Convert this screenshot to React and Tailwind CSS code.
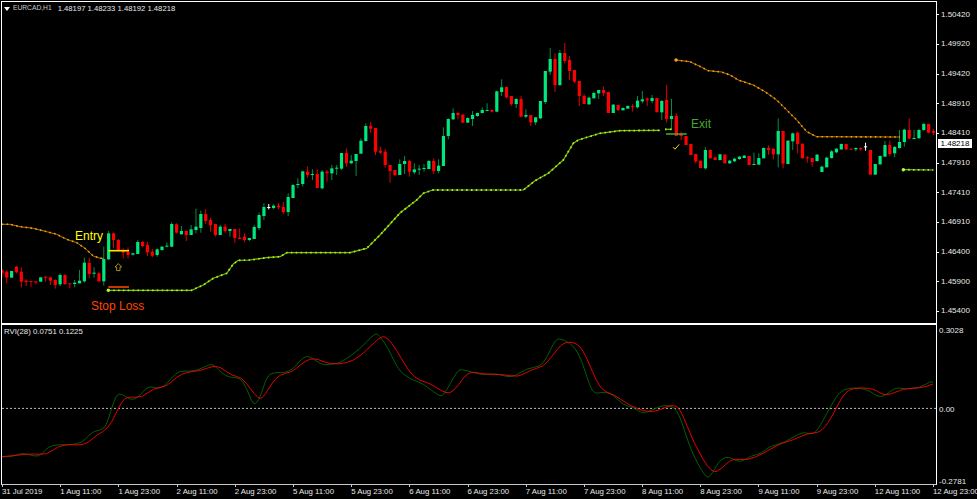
const PITCH = 4.852;
const barX = (i) => 1.9 + PITCH * i;

// candle rows: [bodyTop, bodyBottom, wickTop, wickBottom, type], traced at 3x from the origin y
const segments = [
  { oy: 190, start: 0, rows: [
    [240,250,235,262,'r'],[245,263,240,280,'r'],[243,263,243,263,'g'],[230,247,228,250,'r'],[245,275,232,292,'r'],
    [272,276,268,288,'r'],[273,276,273,290,'r'],[274,277,274,283,'r'],[262,275,262,275,'g'],[260,262,258,275,'r'],
    [262,272,260,285,'r'],[270,285,268,296,'r'],[255,283,250,288,'g'],[255,282,253,285,'r'],[280,282,280,295,'r'],
    [278,282,270,292,'g'],[272,280,240,280,'g'],[218,274,203,278,'g'],[219,252,203,265,'r'],[248,250,232,263,'g'],
    [250,274,245,276,'r'],[207,274,170,287,'g'],[130,208,123,210,'g'],[130,150,128,175,'r'],[150,183,147,185,'r'],
    [183,188,175,205,'r'],[185,195,172,205,'r'],[190,194,188,196,'g'],[156,192,150,192,'g'],[156,168,153,172,'r'],
    [165,187,155,198,'r'],[185,197,177,202,'r'],[178,195,175,200,'g'],[170,180,168,182,'g'],[167,170,157,172,'g'],
    [102,170,97,172,'g'],[103,128,100,130,'r'],
  ] },
  { oy: 120, start: 37, rows: [
    [333,343,318,343,'g'],[333,345,333,363,'r'],[328,345,315,345,'g'],[320,330,266,340,'g'],[282,324,272,338,'g'],
    [282,303,267,312,'r'],[300,316,293,335,'r'],[312,345,312,350,'r'],[320,345,315,345,'g'],[320,333,312,338,'r'],
    [327,333,327,350,'g'],[327,354,327,368,'r'],[353,357,325,357,'r'],[350,360,340,367,'r'],[354,360,354,363,'g'],
    [321,357,315,357,'g'],[285,324,278,330,'g'],[261,288,250,300,'g'],[261,263,252,268,'w'],[257,264,253,268,'g'],
    [257,262,249,268,'r'],[261,276,246,282,'r'],[231,276,220,288,'g'],[195,234,192,234,'g'],[192,194,175,205,'g'],
    [154,192,152,200,'g'],[155,165,140,173,'r'],[162,165,148,180,'g'],[162,204,148,204,'r'],[155,205,150,208,'g'],
    [155,159,150,185,'r'],
  ] },
  { oy: 30, start: 68, rows: [
    [415,430,405,450,'g'],[413,416,405,435,'g'],[369,416,369,420,'g'],[369,400,355,410,'r'],[392,400,375,402,'g'],
    [372,393,372,438,'g'],[332,371,325,371,'g'],[288,333,280,335,'g'],[288,296,276,308,'r'],[294,365,294,375,'r'],
    [362,368,350,372,'r'],[365,405,357,413,'r'],[405,423,405,458,'r'],[420,436,420,436,'r'],[402,435,388,435,'g'],
    [393,402,378,432,'g'],[393,425,390,440,'r'],[418,427,400,433,'g'],[416,419,405,435,'g'],[414,417,402,425,'g'],
    [393,417,390,417,'g'],[393,423,385,432,'r'],[407,423,388,430,'g'],[318,408,292,408,'g'],[267,318,265,328,'g'],
    [249,268,235,270,'g'],[249,255,245,268,'r'],[254,278,252,278,'r'],[264,278,262,278,'g'],[255,267,243,288,'g'],
    [249,258,248,260,'g'],[240,249,232,250,'g'],[240,243,220,243,'g'],[240,245,238,247,'r'],[184,245,182,247,'g'],
    [172,186,148,198,'g'],[171,202,170,205,'r'],[198,222,198,228,'r'],[207,222,205,234,'g'],[207,260,198,262,'r'],
    [255,260,238,264,'g'],[255,277,255,288,'r'],[262,277,262,285,'g'],[213,265,213,268,'g'],[123,216,123,222,'g'],
    [87,125,54,135,'g'],[87,165,70,186,'r'],[69,165,60,168,'g'],[69,93,39,100,'r'],[90,123,78,150,'r'],
    [120,155,120,160,'r'],[153,198,153,228,'r'],[198,222,192,222,'r'],[203,223,200,225,'g'],[189,205,185,205,'g'],
    [180,190,180,207,'g'],[180,190,170,198,'r'],[186,249,186,249,'r'],[224,249,222,249,'g'],[225,240,225,243,'r'],
    [234,241,232,241,'g'],[228,236,226,236,'g'],[228,231,222,245,'r'],[212,232,198,235,'g'],
  ] },
  { oy: 50, start: 132, rows: [
    [148,154,123,160,'g'],[146,151,142,168,'r'],[144,153,135,160,'g'],[144,186,144,188,'r'],[153,187,150,210,'g'],
    [150,207,105,218,'r'],[198,207,147,240,'g'],[198,258,190,258,'r'],[252,258,245,270,'r'],[258,285,258,285,'r'],
    [282,315,282,315,'r'],[312,334,312,340,'r'],[332,354,332,354,'r'],[300,355,292,358,'g'],[300,325,298,325,'r'],
    [322,330,320,330,'r'],[313,330,312,332,'g'],[314,340,312,340,'r'],[332,340,330,342,'g'],[326,334,323,336,'g'],
    [320,327,318,330,'g'],[317,324,315,324,'g'],[318,345,318,345,'r'],[342,345,308,345,'g'],[324,344,310,345,'g'],
    [294,325,292,325,'g'],[294,300,287,315,'r'],[296,313,296,328,'r'],[243,313,205,352,'g'],[243,341,243,355,'r'],
    [272,342,270,342,'g'],[250,274,248,300,'g'],[248,282,245,310,'r'],[281,325,281,325,'r'],[322,325,318,338,'r'],
    [324,336,324,350,'r'],[314,333,312,335,'g'],[350,366,347,366,'g'],[323,352,320,352,'g'],[304,324,300,326,'g'],
    [296,307,295,310,'g'],[282,298,280,300,'g'],[282,298,282,300,'r'],[296,298,296,298,'r'],[294,298,292,304,'g'],
    [294,298,292,303,'r'],[289,290,278,302,'w'],[300,374,300,374,'r'],[342,374,342,374,'g'],[318,343,316,345,'g'],
    [285,320,273,320,'g'],[285,312,272,318,'r'],[291,310,288,322,'g'],[276,294,240,296,'g'],[239,276,236,290,'g'],
    [240,266,205,266,'r'],[264,267,240,268,'g'],[240,265,236,265,'g'],[222,240,218,242,'g'],[222,248,222,250,'r'],
    [243,248,237,255,'r'],
  ] },
];

const candles = segments.flatMap(({ oy, start, rows }) =>
  rows.map(([top, bottom, high, low, type], n) => ({
    x: barX(start + n),
    top: oy + top / 3,
    bottom: oy + bottom / 3,
    high: oy + high / 3,
    low: oy + low / 3,
    type,
  }))
);

const candleColors = {
  g: { body: '#00e87c', wick: '#008f48' },
  r: { body: '#ff0000', wick: '#e00000' },
  w: { body: '#ffffff', wick: '#ffffff' },
};

const fromCrop = (ox, oy, pts) => pts.map(([x, y]) => [ox + x / 3, oy + y / 3]);
const toLine = (pts) => pts.map(([x, y]) => `${x.toFixed(1)},${y.toFixed(1)}`).join(' ');

// rounds the corners of a traced line with quadratic segments
function smooth(pts) {
  let d = `M${pts[0][0].toFixed(1)} ${pts[0][1].toFixed(1)}`;
  for (let i = 1; i < pts.length - 1; i++) {
    const mx = (pts[i][0] + pts[i + 1][0]) / 2;
    const my = (pts[i][1] + pts[i + 1][1]) / 2;
    d += ` Q${pts[i][0].toFixed(1)} ${pts[i][1].toFixed(1)} ${mx.toFixed(1)} ${my.toFixed(1)}`;
  }
  const last = pts[pts.length - 1];
  return `${d} L${last[0].toFixed(1)} ${last[1].toFixed(1)}`;
}

const orangeLeft = fromCrop(0, 190, [[5,103],[30,103],[60,110],[100,115],[140,125],[170,133],[200,148],[230,158],[255,175],[280,198],[300,205],[312,205]]);
const orangeRight = fromCrop(640, 50, [[108,30],[150,35],[185,52],[205,62],[245,66],[270,75],[295,90],[340,105],[375,125],[410,150],[440,180],[470,210],[500,245],[530,260],[780,261]]);
const limeMain = [
  ...fromCrop(0, 190, [[325,301],[575,301],[610,285],[640,265],[680,250],[700,222],[715,211],[750,210],[800,203],[840,200],[860,188]]),
  [350,252.7],[366.7,248.3],[380,235],[400,213],
  ...fromCrop(330, 30, [[260,510],[280,490],[308,480],[580,480],[615,452],[655,430],[700,390],[730,340],[745,330],[810,310],[870,302],[990,301]]),
];
const limeStub = fromCrop(640, 50, [[75,238],[95,238]]);
const limeRight = fromCrop(640, 50, [[790,359],[880,360]]);

const rviGreen = [
  ...fromCrop(0, 320, [[5,410],[35,412],[65,397],[105,410],[125,405],[150,373],[240,375],[270,342],[285,333],[305,330],[320,315],[345,232],[358,220],[375,228],[395,241],[415,232],[443,198],[470,205],[490,202],[530,157],[550,153],[590,153],[630,132],[645,137],[665,160],[690,173],[720,172],[740,205],[755,245],[765,254],[780,235],[800,170],[820,157],[870,158],[910,110],[930,109],[965,135]]),
  ...fromCrop(330, 320, [[0,133],[30,130],[90,88],[135,38],[150,48],[175,85],[205,150],[240,178],[280,190],[330,232],[345,220],[380,155],[395,147],[430,158],[460,165],[500,160],[545,175],[590,145],[630,140],[650,115],[675,60],[690,55],[730,75],[755,120],[780,200],[795,222],[825,215],[850,225],[880,255],[910,262],[940,283],[990,258]]),
  ...fromCrop(647, 320, [[70,255],[95,275],[130,390],[175,472],[190,470],[215,425],[235,410],[255,415],[280,428],[310,408],[345,400],[365,380],[415,367],[465,335],[490,343],[510,335],[550,260],[585,203],[660,205],[700,238],[745,202],[770,207],[820,203],[850,184],[858,187]]),
];
const rviRed = [
  ...fromCrop(0, 320, [[5,410],[60,405],[95,401],[140,405],[175,378],[210,373],[240,376],[265,368],[290,345],[325,325],[345,285],[370,237],[390,230],[425,233],[460,205],[500,200],[530,170],[560,156],[600,153],[640,137],[665,143],[695,167],[725,172],[750,205],[775,236],[790,233],[815,190],[840,163],[875,157],[900,135],[930,115],[955,118]]),
  ...fromCrop(330, 320, [[0,133],[50,130],[90,110],[150,50],[170,50],[200,90],[240,160],[270,182],[300,190],[350,223],[375,210],[415,152],[460,163],[520,163],[565,172],[600,150],[640,140],[665,110],[700,65],[740,68],[765,100],[810,210],[850,222],[900,258],[955,277],[990,270]]),
  ...fromCrop(647, 320, [[75,253],[100,265],[140,370],[195,463],[225,445],[255,415],[300,422],[350,400],[400,370],[440,360],[480,340],[520,338],[550,300],[590,220],[620,203],[680,205],[715,230],[770,205],[820,205],[858,192]]),
];

const prices = ['1.50420', '1.49920', '1.49420', '1.48910', '1.48410', '1.47910', '1.47410', '1.46910', '1.46400', '1.45900', '1.45400'];
const times = ['31 Jul 2019', '1 Aug 11:00', '1 Aug 23:00', '2 Aug 11:00', '2 Aug 23:00', '5 Aug 11:00', '5 Aug 23:00', '6 Aug 11:00', '6 Aug 23:00', '7 Aug 11:00', '7 Aug 23:00', '8 Aug 11:00', '8 Aug 23:00', '9 Aug 11:00', '9 Aug 23:00', '12 Aug 11:00', '12 Aug 23:00'];

function DottedLine({ points, base, dot, width = 1 }) {
  return (
    <g fill="none" strokeLinejoin="round">
      <polyline points={toLine(points)} stroke={base} strokeWidth={width} />
      <polyline points={toLine(points)} stroke={dot} strokeWidth={width + 0.6} strokeDasharray="1.6 3.25" />
    </g>
  );
}

function PriceChart() {
  return (
    <svg className="w-full h-full block" viewBox="2 2 934 321">
      {candles.map((c, i) => {
        const colors = candleColors[c.type];
        return (
          <g key={i}>
            <line x1={c.x} x2={c.x} y1={c.high} y2={c.low} stroke={colors.wick} strokeWidth="1" />
            <rect x={c.x - 1.6} y={c.top} width="3.2" height={Math.max(c.bottom - c.top, 1)} fill={colors.body} />
          </g>
        );
      })}
      <DottedLine points={orangeLeft} base="#b87400" dot="#f59e00" />
      <DottedLine points={orangeRight} base="#b87400" dot="#f59e00" />
      <DottedLine points={limeMain} base="#78bc00" dot="#a4f01a" width={1.2} />
      <DottedLine points={limeStub} base="#78bc00" dot="#a4f01a" width={1.2} />
      <DottedLine points={limeRight} base="#78bc00" dot="#a4f01a" width={1.2} />
      <circle cx="676" cy="60" r="1.7" fill="#ffa500" />
      <circle cx="108.3" cy="290.3" r="1.7" fill="#adff2f" />
      <circle cx="903.3" cy="169.7" r="1.7" fill="#adff2f" />
      {/* trade levels */}
      <line x1="108.3" x2="129" y1="250.7" y2="250.7" stroke="#ffe800" strokeWidth="1.6" />
      <line x1="108.3" x2="129" y1="287" y2="287" stroke="#ff4500" strokeWidth="1.6" />
      <line x1="666" x2="686.7" y1="134" y2="134" stroke="#3fa82a" strokeWidth="1.6" />
      {/* buy arrow */}
      <polygon points="118.3,263.6 121.6,267 120,267 120,270.6 116.6,270.6 116.6,267 115,267" fill="none" stroke="#c9b52a" strokeWidth="0.8" />
      {/* exit check */}
      <polyline points="673,147.2 675,149.2 679.2,144.4" fill="none" stroke="#ffdf20" strokeWidth="1" />
    </svg>
  );
}

function RviChart() {
  return (
    <svg className="w-full h-full block" viewBox="2 325 934 159">
      <line x1="2" x2="936" y1="408.4" y2="408.4" stroke="#e8e8e8" strokeWidth="0.8" strokeDasharray="2 2" />
      <path d={smooth(rviGreen)} fill="none" stroke="#006a00" strokeWidth="0.9" />
      <path d={smooth(rviRed)} fill="none" stroke="#ff0000" strokeWidth="0.9" />
    </svg>
  );
}

export default function App() {
  return (
    <div className="w-[977px] h-[499px] bg-black overflow-hidden pt-px text-[7.8px] leading-none text-[#e8e8e8] font-['Liberation_Sans',Arial,sans-serif]">
      {/* price window */}
      <div className="flex h-[322px]">
        <div className="relative w-[936px] ml-px shrink-0 border-l border-t border-r border-white">
          <PriceChart />
          <div className="absolute left-[2px] top-[1px] flex items-center gap-[3px] h-[11px] whitespace-nowrap">
            <span className="w-0 h-0 border-l-[3px] border-r-[3px] border-t-[4px] border-l-transparent border-r-transparent border-t-white" />
            <span className="text-[6.7px] text-[#c8ccd0]">EURCAD,H1</span>
            <span className="ml-[3px] text-[7.7px]">1.48197 1.48233 1.48192 1.48218</span>
          </div>
          <div className="absolute left-[73px] top-[228px] text-[12px] text-[#ffff00]">Entry</div>
          <div className="absolute left-[89px] top-[298px] text-[12px] text-[#ff4500]">Stop Loss</div>
          <div className="absolute left-[689px] top-[116px] text-[12px] text-[#45a82c]">Exit</div>
        </div>
        <div className="relative flex-1 -mt-px text-[8px]">
          {prices.map((price) => (
            <div key={price} className="flex items-center h-[29.67px]">
              <span className="w-[2px] h-px bg-white" />
              <span className="ml-[2px]">{price}</span>
            </div>
          ))}
          <div className="absolute left-[1px] top-[139px] w-[34px] h-[9px] flex items-center justify-center bg-white text-black">1.48218</div>
        </div>
      </div>

      {/* RVI window */}
      <div className="flex h-[162px]">
        <div className="relative w-[936px] ml-px shrink-0 border-l border-t-2 border-r border-b border-white border-b-[#c8c8c8]">
          <RviChart />
          <div className="absolute left-[2px] top-[3px] whitespace-nowrap">RVI(28) 0.0751 0.1225</div>
        </div>
        <div className="flex-1 pl-[2px] pt-[2px] text-[8px]">
          <div className="flex items-center h-[12px]">0.3028</div>
          <div className="flex items-center h-[12px] mt-[67px]">0.00</div>
          <div className="flex items-center h-[12px] mt-[60px]">-0.2781</div>
        </div>
      </div>

      {/* time axis */}
      <div className="flex pl-[2px] whitespace-nowrap">
        {times.map((time) => (
          <div key={time} className="w-[58.2px] shrink-0">
            <div className="w-px h-[2px] bg-[#c8c8c8]" />
            <div className="mt-px">{time}</div>
          </div>
        ))}
      </div>
    </div>
  );
}
